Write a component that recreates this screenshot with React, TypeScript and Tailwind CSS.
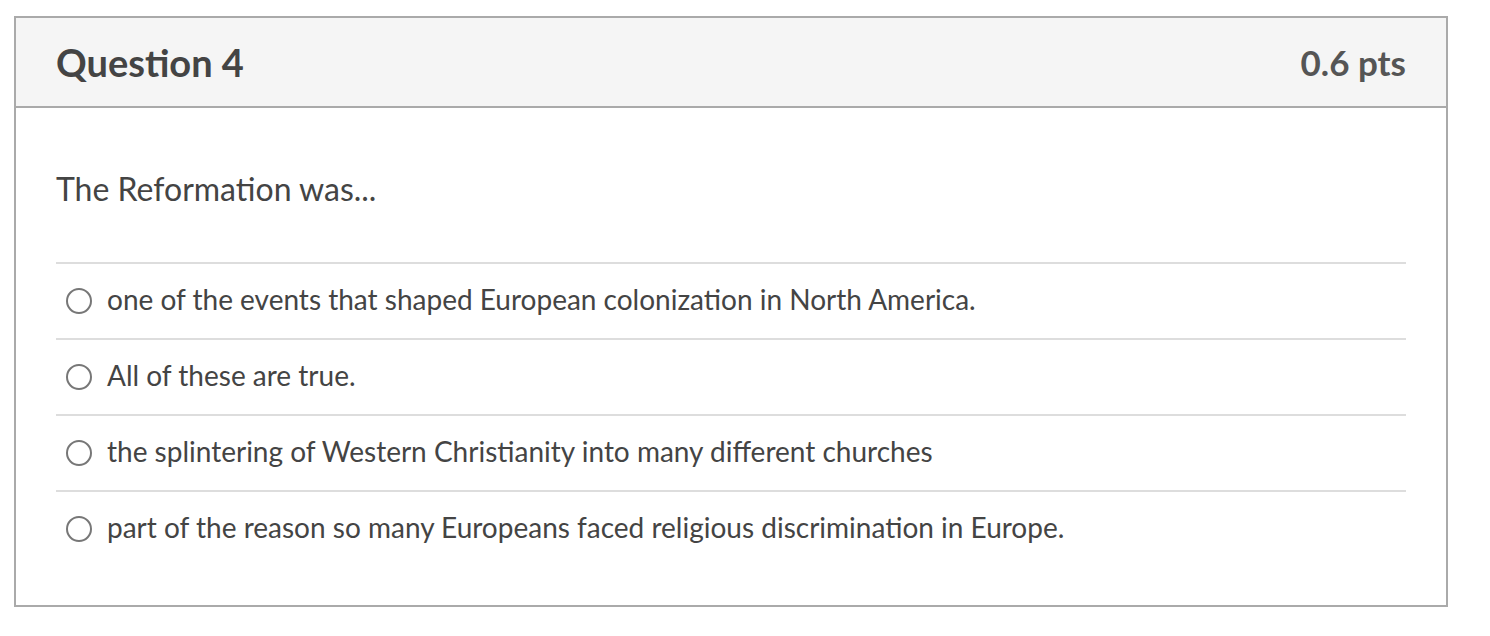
import React from "react";

const answers = [
  "one of the events that shaped European colonization in North America.",
  "All of these are true.",
  "the splintering of Western Christianity into many different churches",
  "part of the reason so many Europeans faced religious discrimination in Europe.",
];

export default function App() {
  return (
    <div className="min-h-screen bg-white pt-4 pl-[14px]" style={{ fontFamily: "Lato, 'Noto Sans', sans-serif" }}>
      <div className="w-[1434px] border-2 border-[#aaaaaa] text-[#444444]">
        <div className="h-[90px] bg-[#f5f5f5] border-b-2 border-[#aaaaaa] flex items-center justify-between px-10">
          <h2 className="text-[38px] font-bold leading-none">Question 4</h2>
          <span className="text-[35px] font-bold leading-none text-[#555555]">0.6 pts</span>
        </div>
        <div className="px-10 pb-[39px]">
          <p className="pt-[61px] pb-[53px] text-[32px] leading-[40px]">The Reformation was...</p>
          {answers.map((a) => (
            <div key={a} className="h-[76px] border-t-2 border-[#dddddd] flex items-center">
              <span className="ml-[10px] w-[26px] h-[26px] rounded-full border-2 border-[#777777] shrink-0" />
              <span className="ml-[15px] text-[28px] leading-[36px] -mt-[4px]">{a}</span>
            </div>
          ))}
        </div>
      </div>
    </div>
  );
}
